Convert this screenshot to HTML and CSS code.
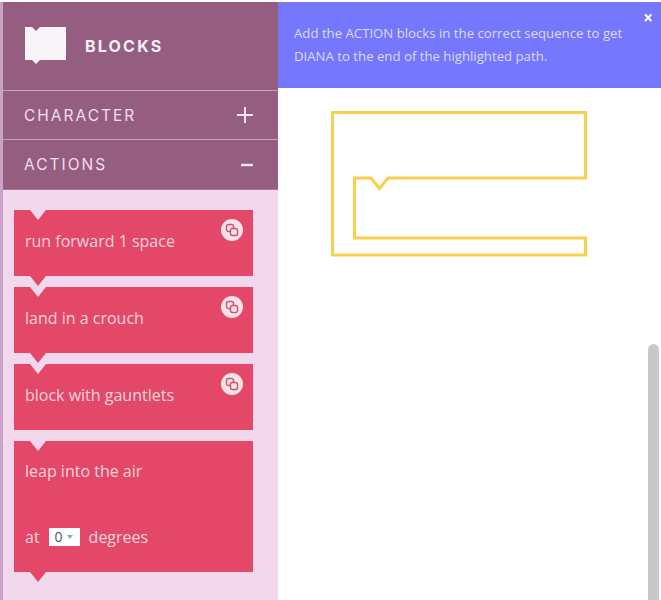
FILE: index.html
```html
<!DOCTYPE html>
<html lang="en">
<head>
<meta charset="utf-8">
<title>Blocks</title>
<link rel="stylesheet" href="styles.css">
</head>
<body>
<div class="app">
  <aside class="sidebar">
    <header class="brand">
      <svg class="brand-icon" width="41" height="38" viewBox="0 0 41 38" aria-hidden="true">
        <path d="M0 0H7L11 4L15 0H41V33H15L11 37L7 33H0Z" fill="#f8f4f7"/>
      </svg>
      <h1 class="brand-title">BLOCKS</h1>
    </header>
    <div class="section"><span>CHARACTER</span>
      <svg class="toggle" width="18" height="18" viewBox="0 0 18 18" aria-hidden="true"><path d="M9 1V17M1 9H17" stroke="#f5e6f1" stroke-width="2"/></svg>
    </div>
    <div class="section section-last"><span>ACTIONS</span>
      <svg class="toggle" width="18" height="18" viewBox="0 0 18 18" aria-hidden="true"><path d="M5 9H17" stroke="#f5e6f1" stroke-width="2.4"/></svg>
    </div>
    <div class="panel">
      <div class="block block-tab">
        <span class="block-text">run forward 1 space</span>
        <span class="copy"><svg width="14" height="14" viewBox="0 0 14 14" aria-hidden="true"><rect x="1.500" y="1.500" width="7" height="7" rx="2" fill="none" stroke="#c9566f" stroke-width="1.400"/><rect x="5.500" y="5.500" width="7" height="7" rx="2" fill="#f9e3e8" stroke="#c9566f" stroke-width="1.400"/></svg></span>
      </div>
      <div class="block block-tab">
        <span class="block-text">land in a crouch</span>
        <span class="copy"><svg width="14" height="14" viewBox="0 0 14 14" aria-hidden="true"><rect x="1.500" y="1.500" width="7" height="7" rx="2" fill="none" stroke="#c9566f" stroke-width="1.400"/><rect x="5.500" y="5.500" width="7" height="7" rx="2" fill="#f9e3e8" stroke="#c9566f" stroke-width="1.400"/></svg></span>
      </div>
      <div class="block">
        <span class="block-text">block with gauntlets</span>
        <span class="copy"><svg width="14" height="14" viewBox="0 0 14 14" aria-hidden="true"><rect x="1.500" y="1.500" width="7" height="7" rx="2" fill="none" stroke="#c9566f" stroke-width="1.400"/><rect x="5.500" y="5.500" width="7" height="7" rx="2" fill="#f9e3e8" stroke="#c9566f" stroke-width="1.400"/></svg></span>
      </div>
      <div class="block block-tab block-tall">
        <span class="block-text">leap into the air</span>
        <div class="block-row">
          <span>at</span>
          <span class="select">0<i class="caret"></i></span>
          <span>degrees</span>
        </div>
      </div>
    </div>
  </aside>
  <main class="main">
    <div class="notice">
      <p class="notice-text">Add the ACTION blocks in the correct sequence to get DIANA to the end of the highlighted path.</p>
      <span class="close">×</span>
    </div>
    <svg class="path" width="262" height="150" viewBox="0 0 262 150" aria-hidden="true">
      <path d="M1.500 1.500H254.500V67H57L48.500 77.500L40 67H23.500V127H254.500V144H1.500Z" fill="none" stroke="#fbcf4e" stroke-width="3"/>
    </svg>
    <div class="scrollbar"></div>
  </main>
</div>
</body>
</html>
```

FILE: styles.css
```css
* { box-sizing: border-box; }
html, body { margin: 0; height: 100%; overflow: hidden; background: #fff; }
body { font-family: "Open Sans", "Noto Sans", sans-serif; }

.app {
  display: grid;
  grid-template-columns: 278px 1fr;
  height: 600px;
  padding-top: 2px;
}

.sidebar {
  display: flex;
  flex-direction: column;
  height: 598px;
  border-left: 3px solid #c9a2c8;
  background: #f2d8ec;
}

.brand {
  display: flex;
  align-items: center;
  gap: 19px;
  height: 89px;
  padding-left: 22px;
  background: #955e81;
  border-bottom: 1px solid #c9a2bd;
}
.brand-icon { flex: none; }
.brand-title {
  margin: 0;
  font-family: "Inter", "Liberation Sans", sans-serif;
  font-size: 16px;
  font-weight: 700;
  letter-spacing: 2.200px;
  color: #f7eff5;
}

.section {
  display: flex;
  align-items: center;
  justify-content: space-between;
  height: 49px;
  padding: 0 24px 0 21px;
  background: #955e81;
  color: #f1dfeb;
  font-family: "Inter", "Liberation Sans", sans-serif;
  font-size: 15.500px;
  letter-spacing: 2px;
  border-bottom: 1px solid #c9a2bd;
}
.section-last { height: 50px; border-bottom: 1px solid #a87a98; }

.panel {
  flex: 1;
  display: flex;
  flex-direction: column;
  gap: 11px;
  padding: 20px 0 0 11px;
}

.block {
  position: relative;
  display: flex;
  flex-direction: column;
  width: 239px;
  height: 66px;
  padding: 21px 11px 0;
  background: #e34868;
  color: #f9d3db;
  font-size: 16px;
  line-height: 20px;
}
.block::before {
  content: "";
  position: absolute;
  top: 0;
  left: 16px;
  border-left: 8px solid transparent;
  border-right: 8px solid transparent;
  border-top: 10px solid #f2d8ec;
}
.block-tab::after {
  content: "";
  position: absolute;
  top: 100%;
  left: 16px;
  z-index: 1;
  border-left: 8px solid transparent;
  border-right: 8px solid transparent;
  border-top: 10px solid #e34868;
}
.block-tall { height: 131px; padding-top: 20px; }
.block-row {
  display: flex;
  align-items: center;
  gap: 8px;
  margin-top: 46px;
}

.copy {
  position: absolute;
  top: 9px;
  right: 10px;
  display: flex;
  align-items: center;
  justify-content: center;
  width: 22px;
  height: 22px;
  border-radius: 50%;
  background: #f9e3e8;
}

.select {
  display: flex;
  align-items: center;
  gap: 4px;
  width: 31px;
  height: 18px;
  padding-left: 6px;
  margin: 0 1px;
  background: #fff;
  color: #4a5a55;
  font-size: 14px;
}
.caret {
  border-left: 3.500px solid transparent;
  border-right: 3.500px solid transparent;
  border-top: 4px solid #7fb59a;
}

.main { position: relative; min-width: 0; }

.notice {
  position: relative;
  height: 86px;
  padding: 20px 30px 0 16px;
  background: #7577fd;
  color: #dcdcfb;
  font-size: 13.200px;
  line-height: 23px;
}
.notice-text { margin: 0; }
.close {
  position: absolute;
  top: 6px;
  right: 8px;
  color: #fff;
  font-size: 17px;
  font-weight: 700;
  line-height: 20px;
}

.path { display: block; margin: 23px 0 0 53px; }

.scrollbar {
  position: absolute;
  top: 342px;
  right: 2px;
  width: 11px;
  height: 270px;
  border-radius: 6px;
  background: #c8c8c8;
}
```
